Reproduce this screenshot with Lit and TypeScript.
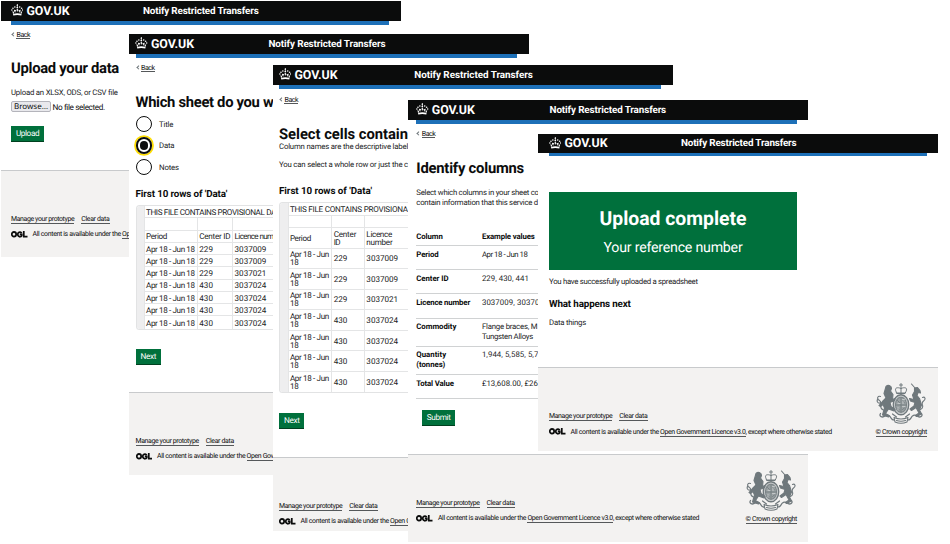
import { LitElement, html, css, svg, nothing, type TemplateResult } from "lit";
import { customElement, property } from "lit/decorators.js";

/** One line of text whose tracking is set so that it fills a given width. */
@customElement("fit-text")
class FitText extends LitElement {
  @property({ type: Number }) w = 0;
  @property() text = "";
  static styles = css`
    :host { display: inline-block; white-space: pre; }
    span { display: inline-block; transform: translateY(var(--drop, .8px)); }
  `;
  render() {
    return html`<span>${this.text}</span>`;
  }
  updated() {
    const s = this.renderRoot.querySelector("span") as HTMLElement;
    s.style.letterSpacing = "0px";
    const natural = s.getBoundingClientRect().width;
    s.style.letterSpacing = `${(this.w - natural) / this.text.length}px`;
  }
}

const t = (text: string, w: number, cls = "") =>
  html`<fit-text class=${cls} .text=${text} .w=${w}></fit-text>`;

const crown = svg`
  <g fill="#fff">
    <circle cx="16" cy="2" r="1.7"/><path d="M14.2 3.6h3.6v1.2h-3.6zM15.3 .2h1.4v6h-1.4z"/>
    <circle cx="16" cy="8.2" r="2.2"/>
    <circle cx="9.8" cy="7.2" r="2"/><circle cx="22.2" cy="7.2" r="2"/>
    <circle cx="5" cy="10.2" r="2"/><circle cx="27" cy="10.2" r="2"/>
    <circle cx="2.3" cy="14.6" r="1.9"/><circle cx="29.7" cy="14.6" r="1.9"/>
    <path d="M16 11.2l2 3-1.1 4.6h-1.8L14 14.2zM8.1 13.8l2.4 1.3 2.4-1.2-.5 4-1.6.1.8 2.5-1.7.3-1.3-2.6-1.2.5zM23.9 13.8l-2.4 1.3-2.4-1.2.5 4 1.6.1-.8 2.5 1.7.3 1.3-2.6 1.2.5zM3.4 17.2l2.2 1.9 1.6-.6.5 5.4-2.6.5zM28.6 17.2l-2.2 1.9-1.6-.6-.5 5.4 2.6.5z"/>
    <path d="M5.2 25.2Q16 20.8 26.8 25.2L26.3 28.8Q16 26.3 5.7 28.8z"/>
  </g>`;

const crest = svg`
  <g fill="none" stroke="#6f787c" stroke-width="2.2" stroke-linecap="round" stroke-linejoin="round">
    <path fill="#f3f2f1" stroke-width="2" d="M40 17c-4-8 3-9 10-6 7-3 14-2 10 6l-2 4H42z"/>
    <path d="M50 1v20M47 4h6M42 20h16" stroke-width="2"/>
    <ellipse cx="50" cy="43.5" rx="15.5" ry="20" fill="#c3c7c8" stroke-width="2.6"/>
    <ellipse cx="50" cy="43.5" rx="11" ry="15" fill="#9ba2a4" stroke="#7d8588" stroke-dasharray="2.4 1.4"/>
    <path d="M50 30v28M40 44h20M43 35l4 4m7-3l3 4M43 50l4 4m6-1l4-3" stroke-width="1.6"/>
    <path stroke="#dfe1e1" stroke-width="1.2" d="M44 41h4m5-8h4m-4 14h5m-14 2v5m10-17v4"/>
    <path fill="#6f787c" d="M20 7c5-5 11-1 11 4l-2 5 5 7-1 10 5-2-1 4-9 4 2 8 8 6-2 3-11-4-6 9 8 5-2 2-12-4 4-14-3-7-5 4-3-2 7-8 7-7-4-9z"/>
    <path d="M15 54C3 51 15 40 7 35 0 31 4 25 9 27M4 32c-4 4 0 9 4 8"/>
    <path fill="#6f787c" d="M77 10l6-1 5 6 1 5-5-1-2 6 5 6 4 13-4 10 4 8-10 5-2-2 7-5-6-11-9 6-3-3 8-6 2-7-9-3-2-5 9 2-3-9 4-7z"/>
    <path d="M78 10L71 2M89 53c11-5-2-11 6-17 6-5 2-9-2-7"/>
    <path stroke-width="2.6" d="M9 61c-4 6 4 9 9 5s10-1 12 4 6 5 11 4M91 61c4 6-4 9-9 5s-10-1-12 4-6 5-11 4"/>
    <path fill="#f3f2f1" d="M36 69q14 6 28 0l-2 9q-12 5-24 0z"/>
    <path d="M41 75q9 3 18 0M33 62l8 6m26-6l-8 6" stroke-width="2.4"/>
  </g>`;

const ogl = svg`
  <g fill="none" stroke="#0b0c0c" stroke-width="4.2">
    <circle cx="7.2" cy="7.5" r="5.3"/>
    <path d="M26 4.6A5.3 5.3 0 1 0 26 10.8V7.6h-4.6M31 0v12.7H40"/>
  </g>`;

interface Screen {
  id: string;
  back: boolean;
  titleW: number;
  body: () => TemplateResult;
}

const row = (period: TemplateResult, id: string, licence: string) => html`
  <div class="tr"><i class="rh"></i><div>${period}</div><div>${t(id, 13.7)}</div><div>${t(licence, 31.8)}</div></div>`;

const records = [
  ["229", "3037009"], ["229", "3037009"], ["229", "3037021"],
  ["430", "3037024"], ["430", "3037024"], ["430", "3037024"], ["430", "3037024"],
];

const sheet = (wrap: boolean) => html`
  <div class="sheet">
    <div class="tr full"><i class="rh"></i><div>${wrap
      ? t("THIS FILE CONTAINS PROVISIONA", 118)
      : t("THIS FILE CONTAINS PROVISIONAL DA", 130)}</div></div>
    <div class="tr"><i class="rh"></i><div></div><div></div><div></div></div>
    <div class="tr head"><i class="rh"></i>
      <div>${t("Period", 21)}</div>
      <div>${wrap ? html`${t("Center", 22.5)}${t("ID", 6.5)}` : t("Center ID", 31)}</div>
      <div>${wrap ? html`${t("Licence", 25.5)}${t("number", 26)}` : t("Licence num", 39)}</div>
    </div>
    ${records.map(([id, licence]) =>
      row(wrap ? html`${t("Apr 18 - Jun", 39)}${t("18", 9)}` : t("Apr 18 - Jun 18", 48.7), id, licence))}
  </div>`;

const radio = (label: string, w: number, on = false) => html`
  <div class="radio"><i class="ring ${on ? "on" : ""}"></i>${t(label, w)}</div>`;

const examples: [string[], number[], string[], number[]][] = [
  [["Period"], [22.3], ["Apr 18 - Jun 18"], [45.5]],
  [["Center ID"], [32.3], ["229, 430, 441"], [47]],
  [["Licence number"], [53.8], ["3037009, 30370"], [57.5]],
  [["Commodity"], [40], ["Flange braces, M", "Tungsten Alloys"], [55.5, 51]],
  [["Quantity", "(tonnes)"], [29.8, 29], ["1,944, 5,585, 5,7"], [56.5]],
  [["Total Value"], [37.5], ["£13,608.00, £26"], [56]],
];

const screens: Screen[] = [
  { id: "p1", back: true, titleW: 115.5, body: () => html`
    <h1>${t("Upload your data", 108)}</h1>
    <p>${t("Upload an XLSX, ODS, or CSV file", 106.5)}</p>
    <div class="file"><span class="browse">${t("Browse…", 34)}</span>${t("No file selected.", 52)}</div>
    <div class="btn">${t("Upload", 23.3)}</div>` },
  { id: "p2", back: true, titleW: 117, body: () => html`
    <h1>${t("Which sheet do you w", 138)}</h1>
    <div class="radios">${radio("Title", 14.3)}${radio("Data", 15.3, true)}${radio("Notes", 19.8)}</div>
    <h2>${t("First 10 rows of 'Data'", 91.7)}</h2>
    ${sheet(false)}
    <div class="btn">${t("Next", 15.7)}</div>` },
  { id: "p3", back: true, titleW: 118.5, body: () => html`
    <h1>${t("Select cells contain", 129)}</h1>
    <p>${t("Column names are the descriptive label", 129.2)}</p>
    <p class="second">${t("You can select a whole row or just the c", 129)}</p>
    <h2>${t("First 10 rows of 'Data'", 93)}</h2>
    ${sheet(true)}
    <div class="btn">${t("Next", 15.7)}</div>` },
  { id: "p4", back: true, titleW: 116.5, body: () => html`
    <h1>${t("Identify columns", 107.7)}</h1>
    <p>${t("Select which columns in your sheet co", 122.5)}${t("contain information that this service d", 121.7)}</p>
    <div class="defs">
      <div class="def top"><b>${t("Column", 26.5)}</b><b>${t("Example values", 52.8)}</b></div>
      ${examples.map(([k, kw, v, vw]) => html`
        <div class="def ${k.length + v.length > 2 ? "tall" : ""}">
          <b>${k.map((s, i) => t(s, kw[i]))}</b><div>${v.map((s, i) => t(s, vw[i]))}</div>
        </div>`)}
    </div>
    <div class="btn">${t("Submit", 23.7)}</div>` },
  { id: "p5", back: false, titleW: 115.5, body: () => html`
    <div class="done"><div class="big">${t("Upload complete", 147)}</div><div class="ref">${t("Your reference number", 139)}</div></div>
    <p>${t("You have successfully uploaded a spreadsheet", 148.7)}</p>
    <h2>${t("What happens next", 81.7)}</h2>
    <p class="second">${t("Data things", 37)}</p>` },
];

@customElement("app-root")
class AppRoot extends LitElement {
  static styles = css`
    :host {
      display: block; position: relative; width: 950px; height: 544px; overflow: hidden; background: #fff;
      color: #0b0c0c; font: 7.8px/10px Roboto, "Liberation Sans", sans-serif; text-rendering: geometricPrecision;
    }
    * { box-sizing: border-box; }
    h1, h2, p { margin: 0; }
    p, .sheet, .def > div, .radio { color: #222324; }
    fit-text { display: block; }
    .screen {
      position: absolute; width: 400px; overflow: hidden; background: #fff; padding: 0;
      display: flex; flex-direction: column; --pad: 10px; --right: 12.5px; --head: 20px; --title: 89.5px;
    }
    .p1 { left: 1px; top: 1px; height: 256px; --title: 73.6px; }
    .p2 { left: 129px; top: 34px; height: 441px; --pad: 6.5px; --title: 74.5px; }
    .p3 { left: 273px; top: 65px; height: 466px; --pad: 6px; --title: 76.8px; }
    .p4 { left: 408px; top: 100px; height: 442px; --pad: 8.3px; --right: 11px; --title: 74.8px; }
    .p5 { left: 538px; top: 134px; height: 317px; --pad: 11px; --right: 11px; --head: 18.5px; --title: 73.5px; }

    header {
      flex: none; height: var(--head); background: #0b0c0c; color: #fff; padding-left: calc(var(--pad) - .3px);
      display: flex; align-items: center; font-weight: 700;
    }
    header svg { width: 12.6px; height: 12.2px; flex: none; margin: 0 3.2px 1px 0; }
    .gov { font-size: 12.4px; width: 43px; }
    .name { font-size: 9.9px; margin-left: var(--title); }
    .bar { flex: none; height: 3.6px; margin: 0 var(--right) 0 var(--pad); background: #1d70b8; }
    main { flex: none; padding-left: var(--pad); display: flex; flex-direction: column; align-items: flex-start; }
    .p1 main { height: 145px; padding-top: 5.4px; }
    .p2 main { height: 334px; padding-top: 5.4px; }
    .p3 main { height: 368px; padding-top: 5.9px; }
    .p4 main { height: 330px; padding-top: 5.4px; }
    .p5 main { height: 211px; padding-top: 35.9px; }
    .back { display: flex; align-items: center; height: 10px; font-size: 7.1px; }
    .back i { width: 3.2px; height: 3.2px; border: solid #6f777b; border-width: 0 0 .8px .8px; transform: rotate(45deg); margin: 0 1.3px 0 1px; }
    .u { border-bottom: 1px solid #55585a; line-height: 8px; }

    h1 { font-size: 14.8px; line-height: 20px; height: 20px; margin-top: 18.5px; --drop: .3px; }
    h2 { font-size: 9.8px; line-height: 12px; height: 12px; --drop: 1px; }
    .p2 h1 { margin-top: 19px; }
    .p3 h1 { margin-top: 19.5px; }
    .p4 h1 { margin-top: 19px; }
    .p1 p { margin-top: 9px; }
    .file { display: flex; align-items: center; gap: 2px; height: 11px; margin-top: 4px; font-size: 8.2px; }
    .browse { height: 11px; width: 39.5px; padding: 0 2px; background: #e9e9ed; border: 1px solid #b4b4bb; border-radius: 2px; font: 8px/9px "Noto Sans", sans-serif; --drop: .4px; }
    .btn { background: #00703c; color: #fff; height: 16.3px; line-height: 15.3px; padding: 0 4.9px; border-bottom: 1px solid #00401f; font-size: 8.2px; }
    .p1 .btn { margin-top: 13.5px; }
    .p2 .btn { margin-top: 19.2px; }
    .p3 .btn { margin-top: 19.2px; }
    .p4 .btn { margin: 10.9px 0 0 5.6px; --drop: 1.3px; }

    .radios { margin-top: 1.2px; }
    .radio { height: 21.5px; display: flex; align-items: center; gap: 7px; }
    .ring { flex: none; width: 16.5px; height: 16.5px; border: 1px solid #0b0c0c; border-radius: 50%; display: flex; }
    .on { border-width: 2px; box-shadow: 0 0 0 1.8px #fd0; }
    .on::after { content: ""; margin: auto; width: 8.4px; height: 8.4px; border-radius: 50%; background: #0b0c0c; }
    .p2 h2 { margin-top: 10px; }
    .p3 p { margin-top: -1.5px; --drop: .4px; }
    .p3 .second { margin-top: 8px; }
    .p3 h2 { margin-top: 14.5px; }

    .sheet { border: solid #e2e3e4; border-width: 1px 0 1px 1px; border-radius: 3.5px 0 0 3.5px; overflow: hidden; width: 160px; margin-top: 5.5px; font-size: 8.1px; --drop: 0px; }
    .tr { display: grid; grid-template-columns: 7.3px 53.3px 35.3px 1fr; height: 12.25px; border-bottom: 1px solid #e4e5e6; }
    .tr:last-child { border-bottom: 0; }
    .tr > div { border-left: 1px solid #e4e5e6; padding-left: 1.2px; display: flex; flex-direction: column; justify-content: center; line-height: 8px; min-width: 0; }
    .tr.full { grid-template-columns: 7.3px 1fr; }
    .rh { background: #eeeeef; margin-bottom: -1px; }
    .p3 .tr { grid-template-columns: 7.7px 43.8px 32.7px 1fr; height: 20.55px; }
    .p3 .tr:nth-child(-n+2) { height: 12.3px; }
    .p3 .tr.full { grid-template-columns: 7.7px 1fr; }

    .p4 p { margin-top: 9px; }
    .defs { width: 160px; margin-top: 24px; --drop: .2px; }
    .def { display: grid; grid-template-columns: 65.6px 1fr; height: 24.2px; padding-top: 3.7px; border-bottom: 1px solid #d0d2d3; }
    .def.tall { height: 28.2px; }
    .def.top { height: 15px; padding-top: 0; --drop: .8px; }

    .done { width: 248px; height: 78.5px; background: #00703c; color: #fff; display: flex; flex-direction: column; align-items: center; }
    .big { font-size: 19.4px; line-height: 24px; font-weight: 700; margin-top: 14px; --drop: .5px; }
    .ref { font-size: 14.2px; line-height: 20px; margin-top: 7.5px; --drop: 1px; }
    .p5 p { margin-top: 6.5px; --drop: .4px; }
    .p5 h2 { margin-top: 11.5px; }
    .p5 .second { margin-top: 7.5px; }

    footer {
      flex: 1; background: #f3f2f1; border-top: 1px solid #c8cacc; font-size: 6.95px;
      padding: 15px var(--right) 0 var(--pad); display: flex; justify-content: space-between; align-items: flex-start; --drop: .4px;
    }
    .links { display: flex; gap: 7px; padding-top: 29.2px; }
    .licence { display: flex; align-items: center; margin-top: 6.5px; line-height: 8px; }
    .licence fit-text { border-bottom: 1px solid transparent; }
    .licence .u { border-color: #55585a; }
    .licence svg { width: 16.5px; height: 6.6px; margin: 0 5.1px 1px 0; }
    .crown { display: flex; flex-direction: column; align-items: center; }
    .crown svg { width: 50px; height: 41px; margin-bottom: 4px; }
  `;

  private screen(s: Screen) {
    return html`
      <section class="screen ${s.id}">
        <header>
          <svg viewBox="0 0 32 30">${crown}</svg>
          <div class="gov">${t("GOV.UK", 43)}</div>
          <div class="name">${t("Notify Restricted Transfers", s.titleW)}</div>
        </header>
        <div class="bar"></div>
        <main>
          ${s.back ? html`<div class="back"><i></i>${t("Back", 13.7, "u")}</div>` : nothing}
          ${s.body()}
        </main>
        <footer>
          <div>
            <div class="links">${t("Manage your prototype", 63.2, "u")}${t("Clear data", 28.3, "u")}</div>
            <div class="licence">
              <svg viewBox="0 0 40 15" preserveAspectRatio="none">${ogl}</svg>
              ${t("All content is available under the ", 89.5)}${t("Open Government Licence v3.0", 85.5, "u")}${t(", except where otherwise stated", 86.2)}
            </div>
          </div>
          <div class="crown"><svg viewBox="0 0 100 82" preserveAspectRatio="none">${crest}</svg>${t("© Crown copyright", 51.5, "u")}</div>
        </footer>
      </section>`;
  }

  render() {
    return screens.map((s) => this.screen(s));
  }
}
